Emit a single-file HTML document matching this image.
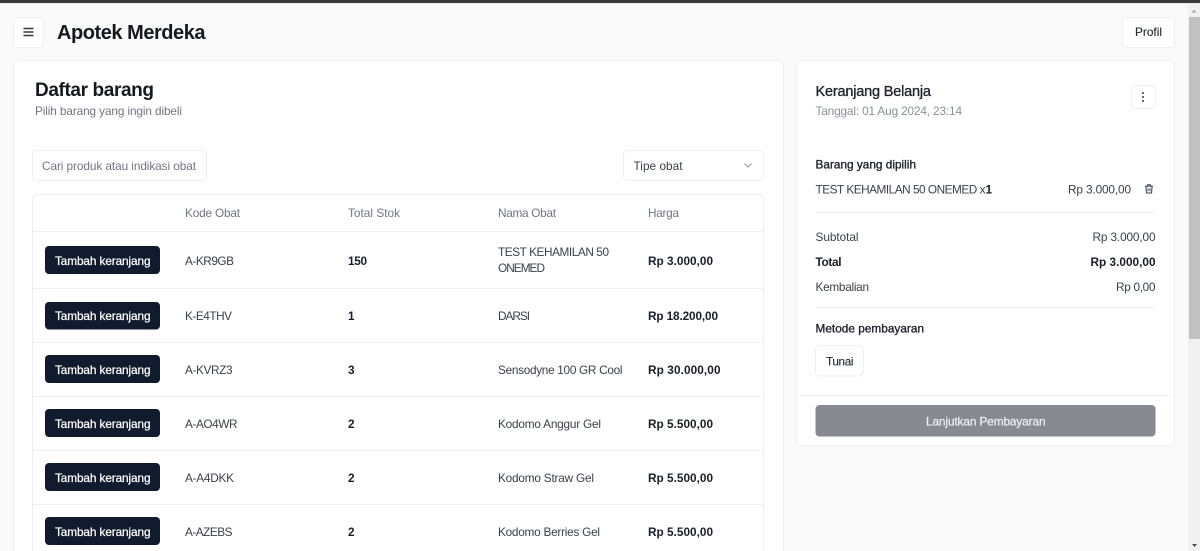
<!DOCTYPE html>
<html lang="id">
<head>
<meta charset="utf-8">
<title>Apotek Merdeka</title>
<style>
html,body{margin:0;padding:0;width:1200px;height:551px;overflow:hidden;background:#fafafa}
svg{display:block;position:absolute;left:0;top:0}
text{font-family:"Liberation Sans",sans-serif;font-size:11.8px;fill:#3a3f4a}
.b{font-weight:700;fill:#1a1e28}
.h{fill:#6f7682}
.m{fill:#1f232d;stroke:#1f232d;stroke-width:.2px}
.w{fill:#fff;stroke:#fff;stroke-width:.25px}
.box{fill:#fff;stroke:#efefef;stroke-width:1}
.btn{fill:#121b2e}
.ln{stroke:#f0f0f0;stroke-width:1}
</style>
</head>
<body>
<svg width="1200" height="551" viewBox="0 0 1200 551" xmlns="http://www.w3.org/2000/svg">
<rect width="1200" height="551" fill="#fafafa"/>
<rect width="1200" height="3" fill="#3b3b3b"/>
<rect y="3" width="1200" height="1" fill="#e8e8e8"/>

<!-- scrollbar -->
<rect x="1188" y="4" width="12" height="547" fill="#f1f1f1"/>
<rect x="1189" y="17" width="11" height="322" fill="#c1c1c1"/>
<path d="M1194 9.500l2.500 3h-5z" fill="#a8a8a8"/>
<path d="M1194.500 547l-2.500-3h5z" fill="#505050"/>

<!-- header -->
<rect class="box" x="13.500" y="17.500" width="30" height="30" rx="4"/>
<path d="M23.500 28.500h10M23.500 32h10M23.500 35.500h10" stroke="#333841" stroke-width="1.500" fill="none"/>
<text x="57" y="39" textLength="148.500" style="font-size:20px;font-weight:700;fill:#15181f">Apotek Merdeka</text>
<rect class="box" x="1122.500" y="17.500" width="52" height="30" rx="4"/>
<text x="1135" y="36" textLength="27" class="m" style="stroke-width:.1px">Profil</text>

<!-- left card -->
<path class="box" d="M13.500 551V66.500a6 6 0 0 1 6-6h758a6 6 0 0 1 6 6V551"/>
<text x="35" y="96" textLength="119" style="font-size:19px;font-weight:700;fill:#15181f">Daftar barang</text>
<text x="35" y="115" textLength="147" class="h">Pilih barang yang ingin dibeli</text>

<rect class="box" x="32.500" y="150.500" width="174" height="30" rx="4"/>
<text x="42" y="170" textLength="154" class="h">Cari produk atau indikasi obat</text>
<rect class="box" x="623.500" y="150.500" width="140" height="30" rx="4"/>
<text x="633.500" y="170" textLength="49">Tipe obat</text>
<path d="M744.500 163.500l3.500 3.500 3.500-3.500" fill="none" stroke="#8b909a" stroke-width="1"/>

<!-- table -->
<path class="box" d="M32.500 551V199.500a5 5 0 0 1 5-5h721a5 5 0 0 1 5 5V551"/>
<text x="185" y="217" textLength="55" class="h">Kode Obat</text>
<text x="348" y="217" textLength="52" class="h">Total Stok</text>
<text x="498" y="217" textLength="58" class="h">Nama Obat</text>
<text x="648" y="217" textLength="31" class="h">Harga</text>
<path class="ln" d="M33 231.500h730M33 288.500h730M33 342.500h730M33 396.500h730M33 450.500h730M33 504.500h730"/>

<!-- row 1 -->
<rect class="btn" x="45" y="246" width="115" height="28" rx="4"/>
<text x="55" y="265" textLength="95.500" class="w">Tambah keranjang</text>
<text x="185" y="265" textLength="49">A-KR9GB</text>
<text x="348" y="265" textLength="19" class="b">150</text>
<text x="498" y="256" textLength="111">TEST KEHAMILAN 50</text>
<text x="498" y="272" textLength="47">ONEMED</text>
<text x="648" y="265" textLength="65" class="b">Rp 3.000,00</text>

<!-- row 2 -->
<rect class="btn" x="45" y="302" width="115" height="27.500" rx="4"/>
<text x="55" y="320" textLength="95.500" class="w">Tambah keranjang</text>
<text x="185" y="320" textLength="47">K-E4THV</text>
<text x="348" y="320" textLength="5" class="b">1</text>
<text x="498" y="320" textLength="32">DARSI</text>
<text x="648" y="320" textLength="70" class="b">Rp 18.200,00</text>

<!-- row 3 -->
<rect class="btn" x="45" y="355" width="115" height="28" rx="4"/>
<text x="55" y="374" textLength="95.500" class="w">Tambah keranjang</text>
<text x="185" y="374" textLength="47.500">A-KVRZ3</text>
<text x="348" y="374" textLength="7" class="b">3</text>
<text x="498" y="374" textLength="124.500">Sensodyne 100 GR Cool</text>
<text x="648" y="374" textLength="72.500" class="b">Rp 30.000,00</text>

<!-- row 4 -->
<rect class="btn" x="45" y="409" width="115" height="28" rx="4"/>
<text x="55" y="428" textLength="95.500" class="w">Tambah keranjang</text>
<text x="185" y="428" textLength="52.500">A-AO4WR</text>
<text x="348" y="428" textLength="7" class="b">2</text>
<text x="498" y="428" textLength="103">Kodomo Anggur Gel</text>
<text x="648" y="428" textLength="65" class="b">Rp 5.500,00</text>

<!-- row 5 -->
<rect class="btn" x="45" y="463" width="115" height="28" rx="4"/>
<text x="55" y="482" textLength="95.500" class="w">Tambah keranjang</text>
<text x="185" y="482" textLength="49">A-A4DKK</text>
<text x="348" y="482" textLength="7" class="b">2</text>
<text x="498" y="482" textLength="96">Kodomo Straw Gel</text>
<text x="648" y="482" textLength="65" class="b">Rp 5.500,00</text>

<!-- row 6 -->
<rect class="btn" x="45" y="517" width="115" height="28" rx="4"/>
<text x="55" y="536" textLength="95.500" class="w">Tambah keranjang</text>
<text x="185" y="536" textLength="47.500">A-AZEBS</text>
<text x="348" y="536" textLength="7" class="b">2</text>
<text x="498" y="536" textLength="102">Kodomo Berries Gel</text>
<text x="648" y="536" textLength="65" class="b">Rp 5.500,00</text>

<!-- right card -->
<rect class="box" x="796.500" y="60.500" width="378" height="385.500" rx="6"/>
<text x="815.500" y="96" textLength="115.500" class="m" style="font-size:14.500px;stroke-width:.35px">Keranjang Belanja</text>
<text x="815.500" y="115" textLength="146.500" style="fill:#8a8f98">Tanggal: 01 Aug 2024, 23:14</text>
<rect class="box" x="1131.500" y="85.500" width="24" height="23" rx="4"/>
<circle cx="1143" cy="93" r="1" fill="#333841"/>
<circle cx="1143" cy="97" r="1" fill="#333841"/>
<circle cx="1143" cy="101" r="1" fill="#333841"/>

<text x="815.500" y="168.500" textLength="100.500" class="m" style="stroke-width:.35px">Barang yang dipilih</text>
<text x="815.500" y="193.500" textLength="170">TEST KEHAMILAN 50 ONEMED x</text>
<text x="985.500" y="193.500" textLength="5.500" class="b">1</text>
<text x="1068" y="193.500" textLength="63">Rp 3.000,00</text>
<path d="M1145 186.300h8M1147.600 186.100v-1.300h2.800v1.300M1146 186.600l.4 6.400h5.200l.4-6.400M1148 188.300v3M1150 188.300v3" fill="none" stroke="#3a3f4a" stroke-width="1"/>
<path class="ln" d="M816 212.500h339"/>

<text x="815.500" y="241" textLength="43">Subtotal</text>
<text x="1092.500" y="241" textLength="63">Rp 3.000,00</text>
<text x="815.500" y="266" textLength="26" class="b">Total</text>
<text x="1090.500" y="266" textLength="65" class="b">Rp 3.000,00</text>
<text x="815.500" y="291" textLength="53.500">Kembalian</text>
<text x="1116" y="291" textLength="39.500">Rp 0,00</text>
<path class="ln" d="M816 307.500h339"/>

<text x="815.500" y="332.500" textLength="108.500" class="m" style="stroke-width:.35px">Metode pembayaran</text>
<rect class="box" x="815.500" y="345.500" width="48" height="30.500" rx="4"/>
<text x="826" y="365.500" textLength="27.500" class="m" style="stroke-width:.1px">Tunai</text>
<path class="ln" d="M797 395.500h377"/>
<rect x="815.500" y="405" width="340" height="31.500" rx="4" fill="#878a91"/>
<text x="926" y="425.500" textLength="119.500" style="fill:#eef0f2;stroke:#eef0f2;stroke-width:.25px">Lanjutkan Pembayaran</text>
</svg>
</body>
</html>
